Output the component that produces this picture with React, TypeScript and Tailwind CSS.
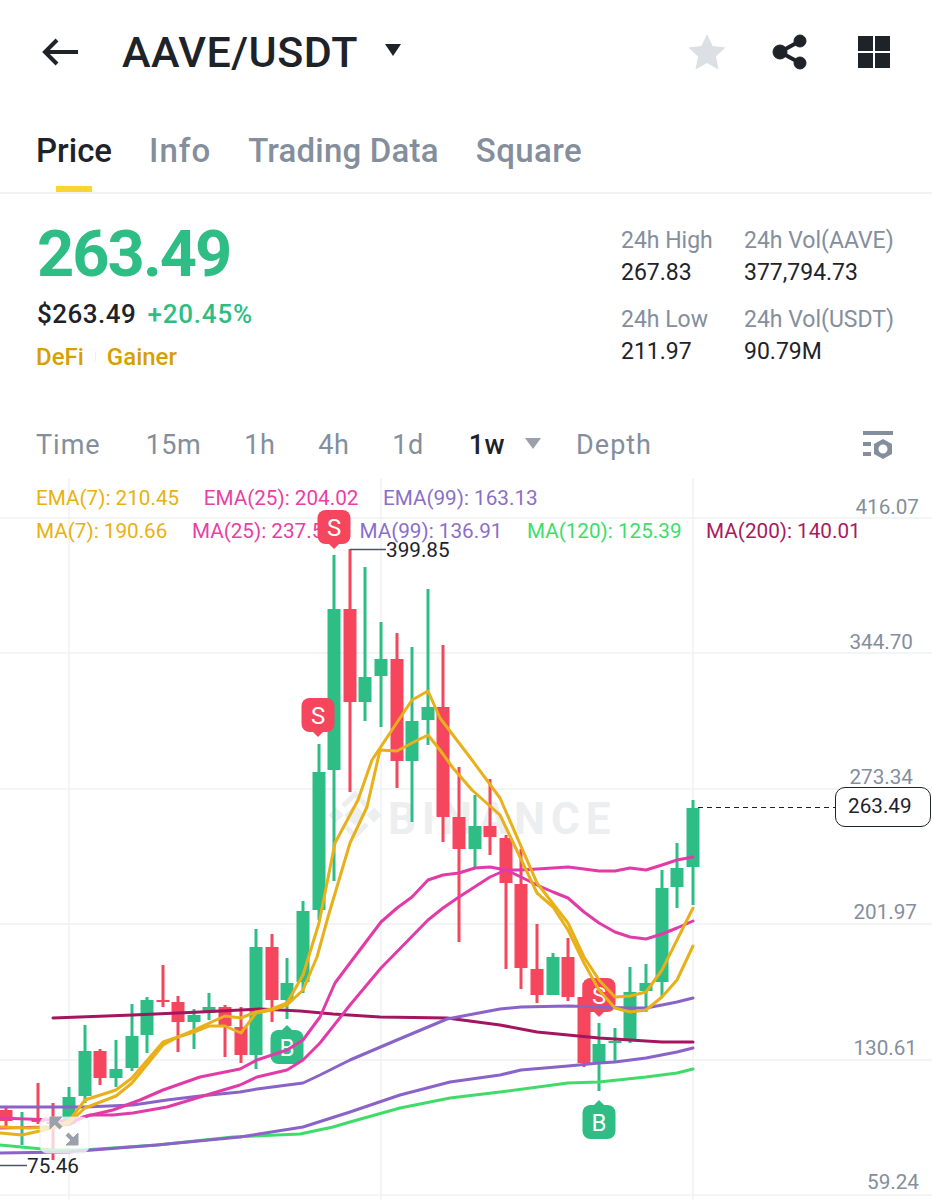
const UP = "#2ebd85";
const DOWN = "#f6465d";

// x, wickTop, wickBottom, bodyTop, bodyBottom, up?
const CANDLES: [number, number, number, number, number, boolean][] = [
  [6, 1107, 1127, 1110, 1121, false],
  [22, 1112, 1145, 1118, 1120, true],
  [38, 1083, 1124, 1120, 1122, false],
  [53, 1103, 1160, 1122, 1124, false],
  [69, 1087, 1125, 1097, 1124, true],
  [85, 1025, 1103, 1051, 1096, true],
  [100, 1049, 1085, 1051, 1078, false],
  [116, 1040, 1087, 1069, 1078, true],
  [132, 1004, 1071, 1036, 1068, true],
  [147, 997, 1053, 1000, 1035, true],
  [163, 965, 1007, 1000, 1002, false],
  [178, 996, 1052, 1002, 1022, false],
  [194, 1009, 1049, 1015, 1022, true],
  [209, 993, 1020, 1007, 1013, true],
  [225, 1005, 1057, 1007, 1026, false],
  [241, 1007, 1063, 1027, 1055, false],
  [256, 929, 1069, 947, 1055, true],
  [272, 934, 1022, 947, 1000, false],
  [287, 958, 1019, 983, 1000, true],
  [303, 901, 993, 911, 982, true],
  [319, 744, 920, 772, 910, true],
  [334, 555, 881, 609, 770, true],
  [350, 549, 792, 609, 702, false],
  [365, 567, 721, 677, 702, true],
  [381, 622, 727, 659, 676, true],
  [397, 633, 788, 659, 761, false],
  [412, 647, 822, 721, 761, true],
  [428, 589, 745, 707, 720, true],
  [443, 645, 842, 707, 817, false],
  [459, 767, 942, 817, 849, false],
  [475, 795, 867, 826, 849, true],
  [490, 779, 855, 826, 837, false],
  [506, 835, 969, 838, 883, false],
  [521, 849, 989, 884, 968, false],
  [537, 924, 1003, 969, 995, false],
  [553, 953, 995, 957, 995, true],
  [568, 938, 1001, 957, 997, false],
  [584, 983, 1067, 997, 1063, false],
  [599, 1023, 1091, 1044, 1063, true],
  [615, 1028, 1063, 1041, 1043, true],
  [630, 967, 1043, 992, 1039, true],
  [646, 964, 1012, 983, 991, true],
  [662, 870, 997, 888, 982, true],
  [677, 843, 908, 868, 887, true],
  [693, 800, 905, 808, 867, true],
];

const LINES: { color: string; points: string }[] = [
  {
    color: "#a3155f",
    points:
      "53,1018 133,1015 200,1012 260,1009 300,1011 333,1014 380,1017 447,1018 500,1025 537,1032 568,1035 599,1038 630,1040 662,1042 693,1042",
  },
  {
    color: "#3fdc6a",
    points:
      "0,1145 53,1150 83,1150 157,1145 233,1137 300,1134 333,1127 350,1122 400,1108 450,1098 500,1092 568,1083 599,1082 646,1077 677,1073 693,1069",
  },
  {
    color: "#8a63c8",
    points:
      "0,1153 67,1152 157,1145 240,1137 303,1127 350,1112 400,1095 450,1082 500,1075 521,1070 568,1066 599,1063 615,1062 646,1058 677,1052 693,1048",
  },
  {
    color: "#8a63c8",
    points:
      "0,1107 85,1107 133,1105 167,1100 200,1096 240,1092 257,1089 303,1083 320,1075 350,1060 397,1040 447,1019 500,1009 521,1007 568,1006 599,1007 630,1008 646,1008 662,1005 677,1002 693,998",
  },
  {
    color: "#e23ba8",
    points:
      "0,1118 53,1120 70,1122 90,1115 113,1115 133,1113 167,1107 200,1097 240,1085 257,1077 287,1070 303,1060 320,1043 350,1005 381,968 428,920 443,908 459,897 490,877 506,870 521,870 537,869 553,868 568,867 584,869 599,871 615,871 630,868 646,870 662,865 677,860 693,857",
  },
  {
    color: "#e23ba8",
    points:
      "0,1128 50,1127 70,1124 83,1117 113,1110 140,1100 163,1090 200,1077 240,1069 257,1060 287,1050 303,1040 320,1017 335,983 350,963 381,922 397,908 412,897 428,880 443,875 459,873 475,868 490,867 506,870 521,877 537,885 553,892 568,898 584,912 599,923 615,932 630,937 646,939 662,934 677,928 693,921",
  },
  {
    color: "#e8b019",
    points:
      "0,1133 22,1135 53,1128 69,1123 85,1108 116,1096 132,1083 163,1045 178,1037 194,1032 209,1026 225,1026 241,1033 256,1013 272,1010 287,1005 303,990 317,957 328,917 350,843 367,807 380,750 397,751 412,743 428,735 440,750 453,768 472,790 500,815 537,893 553,907 568,930 584,963 599,990 615,1008 630,1012 646,1010 662,997 677,980 693,946",
  },
  {
    color: "#e8b019",
    points:
      "0,1127 30,1128 53,1127 69,1121 85,1100 116,1090 132,1078 163,1042 178,1037 194,1030 225,1016 241,1018 256,1012 272,1009 287,1003 303,975 319,923 335,843 358,800 372,760 412,700 428,691 440,718 472,760 500,798 537,883 568,923 584,957 599,980 615,997 630,996 646,992 662,970 677,940 693,908",
  },
];

// label, top, right inset
const AXIS = [
  ["416.07", 495, 13],
  ["344.70", 630, 19],
  ["273.34", 765, 19],
  ["201.97", 900, 15],
  ["130.61", 1036, 15],
  ["59.24", 1170, 13],
] as const;

function Mark({ x, y, label }: { x: number; y: number; label: "S" | "B" }) {
  // x is the tip column, y the centre of the square
  const isSell = label === "S";
  const fill = isSell ? DOWN : UP;
  const tip = isSell ? (
    <path d={`M${x - 7} ${y + 15}L${x} ${y + 22}L${x + 7} ${y + 15}Z`} fill={fill} />
  ) : (
    <path d={`M${x - 7} ${y - 15}L${x} ${y - 22}L${x + 7} ${y - 15}Z`} fill={fill} />
  );
  return (
    <g>
      <rect x={x - 16.5} y={y - 17} width={33} height={34} rx={8} fill={fill} />
      {tip}
      <text
        x={x}
        y={y + 8.5}
        textAnchor="middle"
        fontSize={24}
        fill="#ffffff"
        fontFamily="Roboto, sans-serif"
      >
        {label}
      </text>
    </g>
  );
}

function Chart() {
  return (
    <svg className="absolute inset-0" width={932} height={722} viewBox="0 478 932 722">
      {[518, 653, 789, 924, 1060, 1195].map((y) => (
        <line key={y} x1={0} x2={932} y1={y} y2={y} stroke="#eef0f3" strokeWidth={1.5} />
      ))}
      {[69, 381, 693].map((x) => (
        <line key={x} x1={x} x2={x} y1={478} y2={1200} stroke="#eef0f3" strokeWidth={1.5} />
      ))}

      {/* watermark */}
      <g fill="none" stroke="#eceef0" strokeWidth={5}>
        <path d="M343 806L355 794L367 806" />
        <path d="M343 824L355 836L367 824" />
        <path d="M355 808L362 815L355 822L348 815Z" fill="#eceef0" />
        <path d="M336 811L340 815L336 819L332 815Z" fill="#eceef0" />
        <path d="M374 811L378 815L374 819L370 815Z" fill="#eceef0" />
      </g>
      <text
        x={388}
        y={834}
        fontSize={44}
        fontWeight={700}
        letterSpacing={6}
        fill="#eceef0"
        fontFamily="Roboto, sans-serif"
      >
        BINANCE
      </text>

      <Mark x={599} y={995} label="S" />
      <Mark x={287} y={1047} label="B" />

      {CANDLES.map(([x, wickTop, wickBottom, bodyTop, bodyBottom, up]) => (
        <g key={x} fill={up ? UP : DOWN}>
          <rect x={x - 1.5} y={wickTop} width={3} height={wickBottom - wickTop} />
          <rect x={x - 6.5} y={bodyTop} width={13} height={bodyBottom - bodyTop} />
        </g>
      ))}

      {LINES.map((l, i) => (
        <polyline
          key={i}
          points={l.points}
          fill="none"
          stroke={l.color}
          strokeWidth={3}
          strokeLinejoin="round"
          strokeLinecap="round"
        />
      ))}

      <Mark x={318} y={715} label="S" />
      <Mark x={599} y={1122} label="B" />

      {/* high / low leaders */}
      <path d="M350 549.5H386" stroke="#4b5563" strokeWidth={1.5} fill="none" />
      <path d="M0 1165.5H27" stroke="#4b5563" strokeWidth={1.5} fill="none" />
      <path d="M698 807.5H836" stroke="#1e2329" strokeWidth={1} strokeDasharray="5 4" fill="none" />

      {/* jump to latest */}
      <rect x={40} y={1117} width={49} height={36} rx={7} fill="#ffffff" fillOpacity={0.75} stroke="#e5e7eb" strokeOpacity={0.7} />
      <g fill="#9aa1ac" stroke="#9aa1ac">
        <path d="M50 1117H62L50 1129Z" strokeWidth={1} />
        <path d="M61 1128L53 1120" strokeWidth={4} />
        <path d="M78 1145H66L78 1133Z" strokeWidth={1} />
        <path d="M67 1134L75 1142" strokeWidth={4} />
      </g>
    </svg>
  );
}

export default function App() {
  return (
    <div className="w-[932px] h-[1200px] overflow-hidden bg-white flex flex-col text-[#1e2329] [font-family:Roboto,sans-serif]">
      {/* Top bar */}
      <div className="h-[104px] flex items-center pl-[42px] pr-[42px] shrink-0">
        <svg width={36} height={28} viewBox="0 0 36 28" fill="none" stroke="#1e2329" strokeWidth={4}>
          <path d="M36 14H4M15 2L3 14L15 26" />
        </svg>
        <span className="ml-[44px] text-[43px] leading-none font-medium tracking-[0.5px]">AAVE/USDT</span>
        <svg className="ml-[26px] mb-[4px]" width={18} height={14} viewBox="0 0 18 14" fill="#1e2329">
          <path d="M1 1H17L9 13Z" strokeLinejoin="round" />
        </svg>
        <svg className="ml-auto" width={38} height={36} viewBox="0 0 38 36" fill="#dcdfe4">
          <path d="M19 0L24.5 12L37.5 13.5L28 22.5L30.500 35.500L19 29L7.500 35.500L10 22.500L0.500 13.500L13.500 12Z" />
        </svg>
        <svg className="ml-[46px]" width={36} height={36} viewBox="0 0 36 36" fill="#1e2329" stroke="#1e2329">
          <path d="M28 7L8 18L28 29" fill="none" strokeWidth={4} />
          <circle cx={28} cy={7} r={6} />
          <circle cx={8} cy={18} r={7} />
          <circle cx={28} cy={29} r={6} />
        </svg>
        <div className="ml-[50px] grid grid-cols-2 gap-[2px] w-[32px] h-[32px]">
          <div className="bg-[#1e2329]" />
          <div className="bg-[#1e2329]" />
          <div className="bg-[#1e2329]" />
          <div className="bg-[#1e2329]" />
        </div>
      </div>

      {/* Tabs */}
      <div className="h-[90px] shrink-0 border-b-2 border-[#f0f1f3] flex items-start gap-[37px] pl-[36px] pt-[26px] text-[33px] leading-[42px] text-[#848e9c] font-medium">
        <div className="relative h-[62px] text-[#1e2329]">
          Price
          <div className="absolute left-[20px] bottom-0 w-[36px] h-[6px] bg-[#fcd535]" />
        </div>
        <div className="tracking-[1px]">Info</div>
        <div className="tracking-[0.2px]">Trading Data</div>
        <div className="tracking-[0.4px]">Square</div>
      </div>

      {/* Market stats */}
      <div className="h-[224px] shrink-0 flex justify-between pl-[37px] pr-[38px]">
        <div>
          <div className="mt-[22px] text-[65px] leading-[76px] font-bold tracking-[-2px] text-[#2ebd85]">263.49</div>
          <div className="mt-[6px] flex gap-[11px] text-[26px] leading-[32px] font-medium tracking-[0.5px]">
            <span>$263.49</span>
            <span className="text-[#2ebd85] tracking-[0.8px]">+20.45%</span>
          </div>
          <div className="mt-[13px] -ml-[1px] flex items-center text-[24px] leading-[28px] font-medium text-[#d89f00]">
            <span>DeFi</span>
            <span className="mx-[11px] w-[1px] h-[10px] bg-[#eef0f3]" />
            <span>Gainer</span>
          </div>
        </div>
        <div className="mt-[31px] grid grid-cols-[123px_auto] gap-y-[15px] h-[140px] text-[23px] leading-[32px]">
          <div>
            <div className="text-[#848e9c]">24h High</div>
            <div>267.83</div>
          </div>
          <div>
            <div className="text-[#848e9c]">24h Vol(AAVE)</div>
            <div>377,794.73</div>
          </div>
          <div>
            <div className="text-[#848e9c]">24h Low</div>
            <div>211.97</div>
          </div>
          <div>
            <div className="text-[#848e9c]">24h Vol(USDT)</div>
            <div>90.79M</div>
          </div>
        </div>
      </div>

      {/* Intervals */}
      <div className="h-[60px] shrink-0 flex items-center pl-[36px] pr-[39px] pb-[6px] text-[27px] text-[#848e9c] tracking-[0.5px]">
        <span className="tracking-[1px]">Time</span>
        <span className="ml-[45px]">15m</span>
        <span className="ml-[43px]">1h</span>
        <span className="ml-[43px]">4h</span>
        <span className="ml-[43px]">1d</span>
        <span className="ml-[45px] text-[#1e2329] font-medium">1w</span>
        <svg className="ml-[20px] mb-[4px]" width={16} height={11} viewBox="0 0 16 11" fill="#9aa1ac">
          <path d="M0 0H16L8 11Z" />
        </svg>
        <span className="ml-[35px] tracking-[1px]">Depth</span>
        <svg className="ml-auto" width={30} height={28} viewBox="0 0 30 28" fill="#848e9c">
          <rect x={0} y={0} width={30} height={4} />
          <rect x={0} y={11} width={8} height={4} />
          <rect x={0} y={21} width={8} height={4} />
          <path fillRule="evenodd" d="M20 8L29 13V23L20 28L11 23V13ZM20 13.500A4.500 4.500 0 1 0 20 22.500A4.500 4.500 0 1 0 20 13.500Z" />
        </svg>
      </div>

      {/* Chart */}
      <div className="relative flex-1">
        <Chart />
        <div className="absolute left-[36px] top-[7px] flex flex-col gap-[7px] text-[20.7px] leading-[26px] whitespace-nowrap">
          <div className="flex gap-[24.5px]">
            <span className="text-[#e9b10f]">EMA(7): 210.45</span>
            <span className="text-[#e83fa6]">EMA(25): 204.02</span>
            <span className="text-[#8a6fc9]">EMA(99): 163.13</span>
          </div>
          <div className="flex gap-[24.5px]">
            <span className="text-[#e9b10f]">MA(7): 190.66</span>
            <span className="text-[#e83fa6]">MA(25): 237.56</span>
            <span className="text-[#8a6fc9]">MA(99): 136.91</span>
            <span className="text-[#3fdc6a]">MA(120): 125.39</span>
            <span className="text-[#a81a5e]">MA(200): 140.01</span>
          </div>
        </div>
        <svg className="absolute inset-0" width={932} height={722} viewBox="0 478 932 722">
          <Mark x={334} y={527} label="S" />
        </svg>

        {AXIS.map(([label, y, right]) => (
          <span
            key={label}
            className="absolute text-[20.7px] leading-[24px] text-[#848e9c]"
            style={{ top: y - 478, right }}
          >
            {label}
          </span>
        ))}
        <span className="absolute left-[386px] top-[60px] text-[20.7px] leading-[24px]">399.85</span>
        <span className="absolute left-[27px] top-[676px] text-[20.7px] leading-[24px]">75.46</span>
        <div className="absolute right-[1px] top-[309px] w-[96px] h-[40px] rounded-[10px] border border-[#1e2329] bg-white flex items-center pl-[12px] text-[20.7px]">
          263.49
        </div>
      </div>
    </div>
  );
}
